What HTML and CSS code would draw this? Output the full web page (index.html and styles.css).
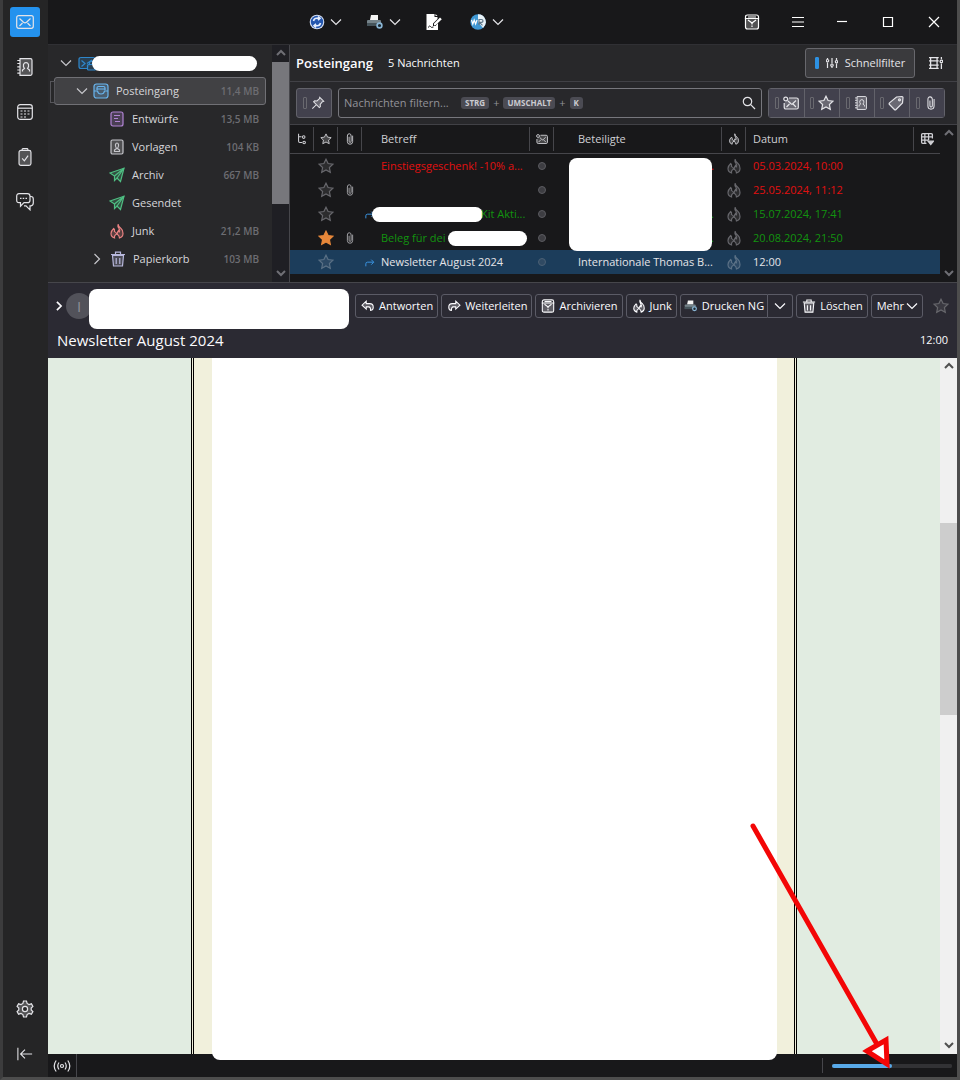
FILE: index.html
```html
<!DOCTYPE html>
<html lang="de">
<head>
<meta charset="utf-8">
<title>Posteingang</title>
<link rel="stylesheet" href="styles.css">
</head>
<body>
<svg class="sprite" aria-hidden="true">
  <symbol id="down" viewBox="0 0 12 12"><path d="M1 3.5l5 5 5-5"/></symbol>
  <symbol id="up" viewBox="0 0 12 12"><path d="M2 8l4-4 4 4"/></symbol>
  <symbol id="downs" viewBox="0 0 12 12"><path d="M2 4l4 4 4-4"/></symbol>
  <symbol id="right" viewBox="0 0 12 12"><path d="M3.5 1l5 5-5 5"/></symbol>
  <symbol id="mail" viewBox="0 0 18 14"><rect x=".7" y=".7" width="16.6" height="12.6" rx="2"/><path d="M3.5 3.5l4 3.8q1.5 1.2 3 0l4-3.8M3.5 11l3-3M14.500 11l-3-3"/></symbol>
  <symbol id="book" viewBox="0 0 16 18"><path class="soft" d="M3 .7h10.500q1.500 0 1.500 1.500v13.600q0 1.500-1.500 1.500H3z"/><path d="M.3 2.500h2.700M.3 5.500h2.700M.3 8.800h2.700M.3 12h2.700M.3 15.200h2.700M5.500 13.500v-1.500l2-1.500q-1.500-2-1-4 .7-1.800 2.500-1.800t2.500 1.800q.5 2-1 4l2 1.500v1.500"/></symbol>
  <symbol id="calendar" viewBox="0 0 16 16"><rect x=".7" y=".7" width="14.600" height="14.600" rx="2.500"/><path d="M.7 4.200h14.600"/><path stroke-dasharray="2 1.500" d="M3.500 7h10M3.500 10h10M3.500 13h7"/></symbol>
  <symbol id="task" viewBox="0 0 14 19"><rect class="soft" x=".7" y="2.500" width="12.600" height="15.800" rx="2"/><path d="M4 2.500V1.500q0-.8.8-.8h4.400q.8 0 .8.800v1M4 11l2.300 2.500 4-5.500"/></symbol>
  <symbol id="chat" viewBox="0 0 18 18"><path d="M3 .7h8.500q2.500 0 2.500 2.500v4q0 2.500-2.500 2.500H8l-3.500 3.500V9.700H3Q.7 9.700.7 7.200v-4Q.7.700 3 .7z"/><path d="M14 3.500h1q2.300 0 2.300 2.500v4q0 2.500-2.300 2.800h-1v4l-4-4H8M4 5.300h1.500M6.700 5.300h1.500M9.500 5.300H11"/></symbol>
  <symbol id="gear" viewBox="0 0 18 18"><path class="soft" d="M7.500 1h3l.6 2.400 1.900 1.100 2.400-.7 1.500 2.600L15.200 8v2l1.700 1.600-1.500 2.600-2.400-.7-1.900 1.100-.6 2.400h-3l-.6-2.400L5 13.500l-2.400.7-1.500-2.600L2.800 10V8L1.100 6.400l1.500-2.600 2.400.7 1.900-1.100z"/><circle class="hole" cx="9" cy="9" r="2.600"/></symbol>
  <symbol id="collapse" viewBox="0 0 18 16"><path d="M1 1v14M17 8H4M9 3L4 8l5 5"/></symbol>
  <symbol id="inbox" viewBox="0 0 16 16"><rect class="soft" x="1" y="1" width="14" height="14" rx="2.500"/><path d="M4 7V5q0-1.500 1.500-1.500h5Q12 3.500 12 5v2M1 8h3.500q.5 3 3.500 3t3.500-3H15M4 6h8"/></symbol>
  <symbol id="draft" viewBox="0 0 16 16"><rect class="soft" x="2" y="1" width="12" height="14" rx="2"/><path d="M5 4.500h6M5 7.500h4M6 10.500h5"/></symbol>
  <symbol id="template" viewBox="0 0 16 16"><rect class="soft" x="2" y="1" width="12" height="14" rx="1.500"/><path d="M5.500 12.500V11l2-1.500Q6 7 6.500 5.500 7 4 8 4t1.500 1.500Q10 7 8.500 9.500l2 1.500v1.500z"/></symbol>
  <symbol id="plane" viewBox="0 0 16 16"><path class="soft" d="M15 1.200L1 6l4.500 3v4.500L8 11l3.500 3.500z"/><path d="M15 1.200L5.500 9M15 1.200L8 11"/></symbol>
  <symbol id="fire" viewBox="0 0 14 16"><path class="soft" d="M8 1q-.5 2.500 1 4.500T9.500 9q-1 0-1-1.500Q7.200 9 7 11.500 6 9 4.500 8.500q.5-2-.8-3Q1 8 1 10.500 1 14 4.500 15q-.5-3 2.500-4 2.500 1.500 2.500 4Q13 14 13 10.500 13 7 11 5.500 8.500 4 8 1z"/></symbol>
  <symbol id="bin" viewBox="0 0 16 16"><path class="soft" d="M2.500 4.500h11l-1 10.500h-9z"/><path d="M1 3.500h14M5.500 3V1.200h5V3M6.200 7v6M9.800 7v6"/></symbol>
  <symbol id="account" viewBox="0 0 18 16"><path class="soft" d="M9 13.500H3q-2 0-2-2v-7q0-2 2-2h12q2 0 2 2V6"/><path d="M3.500 5.500L7 8.500l-3.500 3M14 5L9 8.500"/><rect class="soft" x="9.500" y="9.500" width="8" height="5.500" rx="1"/><path d="M11.500 9.500V8q0-1.500 2-1.500t2 1.500v1.500"/></symbol>
  <symbol id="star" viewBox="0 0 16 16"><path class="soft" d="M8 1.200l2.100 4.300 4.800.7-3.500 3.300.9 4.800L8 12l-4.300 2.300.9-4.800L1.100 6.200l4.800-.7z"/></symbol>
  <symbol id="clip" viewBox="0 0 10 16"><path d="M8.500 3.500v8q0 3.500-3.500 3.500t-3.500-3.500V4Q1.500 1 4 1t2.500 3v7q0 1.500-1.400 1.500T3.800 11V5"/></symbol>
  <symbol id="unread" viewBox="0 0 16 14"><circle cx="2.700" cy="3" r="1.900"/><path class="soft" d="M6 2h7.500Q15.300 2 15.300 3.800v7.400q0 1.800-1.800 1.800H3q-1.800 0-1.800-1.800V7"/><path d="M5 5l3 2.800q.8.700 1.600 0L13 4.500M3.500 11l3-3M13 11l-3-3"/></symbol>
  <symbol id="tag" viewBox="0 0 16 16"><path class="soft" d="M8.500 2L14 1.500q1 0 1 1L14.500 8 8 14.500q-.8.800-1.600 0L1.500 9.500q-.8-.8 0-1.600z"/><circle cx="11.500" cy="4.800" r="1"/></symbol>
  <symbol id="pin" viewBox="0 0 16 16"><path class="soft" d="M10 1.500l4.500 4.500-1.500.5-2.500 3 .2 2.500-1.200 1.200L3 6.700l1.200-1.200 2.600.2 2.700-2.500zM6 10l-4.500 4.500"/></symbol>
  <symbol id="search" viewBox="0 0 14 14"><circle cx="5.500" cy="5.500" r="4.200"/><path d="M8.700 8.700L13 13"/></symbol>
  <symbol id="sliders" viewBox="0 0 12 12"><path d="M1.500 1v1M1.500 5.500V11M6 1v5.500M6 10v1M10.500 1v2M10.500 6.500V11"/><circle cx="1.500" cy="3.700" r="1.200"/><circle cx="6" cy="8.200" r="1.200"/><circle cx="10.500" cy="4.700" r="1.200"/></symbol>
  <symbol id="display" viewBox="0 0 13 13"><path d="M0 1.500h9M0 11.500h9M0 4.500h9M0 8.500h9M1.500 1v3.500M7.500 1v3.500M1.500 4.500v4M7.500 4.500v4M1.500 8.500v3M7.500 8.500v3M11.500 1v2M11.500 7v5"/><circle cx="11.500" cy="5" r="1.200"/></symbol>
  <symbol id="thread" viewBox="0 0 12 14"><path d="M2 1v8.500q0 1.500 1.500 1.500H6M2 4.500h3.500"/><circle cx="8" cy="4.800" r="1.500"/><circle cx="8.500" cy="11" r="1.500"/></symbol>
  <symbol id="columns" viewBox="0 0 13 13"><path d="M11.500 6V2.500q0-1-1-1h-8q-1 0-1 1v7q0 1 1 1H6M1 4.500h11M1 7.500h7M4.500 1.500v9M8 1.500v6"/><path class="solid" d="M7.500 8.500h5L10 11.500z"/></symbol>
  <symbol id="archive" viewBox="0 0 16 16"><path class="soft" d="M1.500 4.500h13V13q0 2-2 2h-9q-2 0-2-2z"/><path d="M1.500 5V3q0-2 2-2h9q2 0 2 2v2M4 3h8M4 6l4 3 4-3"/><path stroke-dasharray="1.500 1" d="M8 9v5"/></symbol>
  <symbol id="reply" viewBox="0 0 16 14"><path class="soft" d="M6 1.500L1.200 6 6 10.500V8h3q2 0 2 4 3 0 3-3.500 0-4.200-4-4.200H6z"/></symbol>
  <symbol id="forward" viewBox="0 0 16 14"><path class="soft" d="M10 1.500L14.800 6 10 10.500V8H7q-2 0-2 4-3 0-3-3.500 0-4.200 4-4.200h4z"/></symbol>
  <symbol id="fwd" viewBox="0 0 12 10"><path d="M1 9V6q0-2 2-2h7M7.500 1l3 3-3 3"/></symbol>
  <symbol id="print" viewBox="0 0 18 16"><path fill="#f4f4f4" stroke="none" d="M5 1h7v5H4z"/><path fill="#75838a" stroke="none" d="M2 6h12q1 0 1 1v5H1V7q0-1 1-1z"/><path fill="#46545b" stroke="none" d="M1 9h14v3H1z"/><circle cx="13.500" cy="11.500" r="2.400" fill="#1d2a33" stroke="#8ab6d6" stroke-width="1.600"/></symbol>
  <symbol id="sync" viewBox="0 0 16 16"><circle cx="8" cy="8" r="7.300" fill="#d5dff2" stroke="none"/><circle cx="8" cy="8" r="6.200" fill="#2456ae" stroke="none"/><path stroke="#e5eeff" stroke-width="1.600" d="M4.500 7q.5-2.500 3-2.700h3M9 2.500l2 1.800-2 1.900M11.500 9q-.5 2.500-3 2.700h-3M7 9.800l-2 1.900 2 1.800"/></symbol>
  <symbol id="sign" viewBox="0 0 18 18"><path fill="#fff" stroke="none" d="M1.500 1h8v3h3v2L8 10.500V13h2.500L13 10v7H1.500z"/><path fill="#fff" stroke="none" d="M10.500 1l2 2h-2zM9 10.500l6-6 1.800 1.700-6 5.800L9 12.500z"/><path stroke="#18181a" stroke-width="1" d="M3 14.500q2-2.500 2.500-1t3 .5"/></symbol>
  <symbol id="wr" viewBox="0 0 16 16"><circle cx="8" cy="8" r="7.700" fill="#3f97d3" stroke="none"/><path fill="#e9f2f8" stroke="none" d="M8 .3a7.700 7.700 0 0 1 5 13.600L8 8z"/><path stroke="#fff" d="M1.500 6l1.300 4 1.400-4 1.400 4L7 6"/><path stroke="#5d7688" d="M9 11V5.500h2.500q1.500 0 1.500 1.400t-1.500 1.400H9.500l3 3"/></symbol>
  <symbol id="signal" viewBox="0 0 18 14"><circle cx="9" cy="7" r="1.500"/><path d="M6 3.500q-2.500 3.500 0 7M12 3.500q2.500 3.500 0 7M3.200 1.500q-4 5.500 0 11M14.800 1.500q4 5.500 0 11"/></symbol>
</svg>

<div class="window">
  <nav class="rail" aria-label="Bereiche">
    <button class="space current" aria-label="E-Mail"><svg class="i18"><use href="#mail"/></svg></button>
    <button class="space" aria-label="Adressbuch"><svg class="i18"><use href="#book"/></svg></button>
    <button class="space" aria-label="Kalender"><svg class="i16"><use href="#calendar"/></svg></button>
    <button class="space" aria-label="Aufgaben"><svg class="i18"><use href="#task"/></svg></button>
    <button class="space" aria-label="Chat"><svg class="i18"><use href="#chat"/></svg></button>
    <span class="spacer"></span>
    <button class="space" aria-label="Einstellungen"><svg class="i18"><use href="#gear"/></svg></button>
    <button class="space" aria-label="Einklappen"><svg class="i16"><use href="#collapse"/></svg></button>
  </nav>

  <div class="main">
    <header class="toolbar">
      <div class="tools">
        <button class="tool" aria-label="Abrufen"><svg class="i16"><use href="#sync"/></svg><svg class="i12"><use href="#down"/></svg></button>
        <button class="tool" aria-label="Drucken"><svg class="i18"><use href="#print"/></svg><svg class="i12"><use href="#down"/></svg></button>
        <button class="tool" aria-label="Unterschrift"><svg class="i18"><use href="#sign"/></svg></button>
        <button class="tool" aria-label="Wörter"><svg class="i16"><use href="#wr"/></svg><svg class="i12"><use href="#down"/></svg></button>
      </div>
      <div class="controls">
        <div class="app-controls">
          <button class="control" aria-label="Archiv"><svg class="i16"><use href="#archive"/></svg></button>
          <button class="control" aria-label="Menü"><svg class="i12" viewBox="0 0 12 12"><path d="M0 1.500h12M0 6h12M0 10.500h12"/></svg></button>
        </div>
        <button class="control" aria-label="Minimieren"><svg class="i12" viewBox="0 0 12 12"><path d="M1 5.500h10"/></svg></button>
        <button class="control" aria-label="Maximieren"><svg class="i12" viewBox="0 0 12 12"><path d="M1.500 1.500h9v9h-9z"/></svg></button>
        <button class="control" aria-label="Schließen"><svg class="i12" viewBox="0 0 12 12"><path d="M1 1l10 10M11 1L1 11"/></svg></button>
      </div>
    </header>

    <div class="panes">
      <aside class="folders">
        <ul class="tree">
          <li class="folder account"><svg class="i12"><use href="#down"/></svg><svg class="i18 blue"><use href="#account"/></svg><span class="mask mask-account"></span></li>
          <li class="folder inbox"><svg class="i12"><use href="#down"/></svg><svg class="i16 sky"><use href="#inbox"/></svg><span class="name">Posteingang</span><span class="size">11,4 MB</span></li>
          <li class="folder sub"><svg class="i16 violet"><use href="#draft"/></svg><span class="name">Entwürfe</span><span class="size">13,5 MB</span></li>
          <li class="folder sub"><svg class="i16"><use href="#template"/></svg><span class="name">Vorlagen</span><span class="size">104 KB</span></li>
          <li class="folder sub"><svg class="i16 green"><use href="#plane"/></svg><span class="name">Archiv</span><span class="size">667 MB</span></li>
          <li class="folder sub"><svg class="i16 green"><use href="#plane"/></svg><span class="name">Gesendet</span></li>
          <li class="folder sub"><svg class="i16 rose"><use href="#fire"/></svg><span class="name">Junk</span><span class="size">21,2 MB</span></li>
          <li class="folder trash"><svg class="i12"><use href="#right"/></svg><svg class="i16 lilac"><use href="#bin"/></svg><span class="name">Papierkorb</span><span class="size">103 MB</span></li>
        </ul>
        <div class="scroll dark"><svg class="i12"><use href="#up"/></svg><div class="track"><div class="thumb thumb-folders"></div></div><svg class="i12"><use href="#downs"/></svg></div>
      </aside>

      <section class="list">
        <div class="list-head">
          <h1>Posteingang</h1><span class="count">5 Nachrichten</span>
          <button class="quick"><span class="mark on"></span><svg class="i12"><use href="#sliders"/></svg>Schnellfilter</button>
          <button class="icon-button" aria-label="Anzeige"><svg class="i14"><use href="#display"/></svg></button>
        </div>
        <div class="filter">
          <button class="filter-button pin" aria-label="Anheften"><span class="mark"></span><svg class="i14"><use href="#pin"/></svg></button>
          <label class="search">
            <input type="text" placeholder="Nachrichten filtern..." aria-label="Nachrichten filtern">
            <span class="keys"><kbd>STRG</kbd>+<kbd>UMSCHALT</kbd>+<kbd>K</kbd></span>
            <svg class="i14"><use href="#search"/></svg>
          </label>
          <div class="filter-group">
            <button class="filter-button" aria-label="Ungelesen"><span class="mark"></span><svg class="i16"><use href="#unread"/></svg></button>
            <button class="filter-button" aria-label="Stern"><span class="mark"></span><svg class="i16"><use href="#star"/></svg></button>
            <button class="filter-button" aria-label="Kontakt"><span class="mark"></span><svg class="i14"><use href="#book"/></svg></button>
            <button class="filter-button" aria-label="Schlagwort"><span class="mark"></span><svg class="i16"><use href="#tag"/></svg></button>
            <button class="filter-button" aria-label="Anhang"><span class="mark"></span><svg class="i14"><use href="#clip"/></svg></button>
          </div>
        </div>
        <div class="messages">
          <table>
            <colgroup><col class="narrow"><col class="narrow"><col class="narrow"><col><col class="narrow"><col><col class="narrow"><col><col class="picker"></colgroup>
            <thead>
              <tr><th><svg class="i12"><use href="#thread"/></svg></th><th><svg class="i12"><use href="#star"/></svg></th><th><svg class="i12"><use href="#clip"/></svg></th><th class="subject">Betreff</th><th><svg class="i12"><use href="#unread"/></svg></th><th class="people">Beteiligte</th><th><svg class="i12"><use href="#fire"/></svg></th><th class="date">Datum</th><th><svg class="i14"><use href="#columns"/></svg></th></tr>
            </thead>
            <tbody>
              <tr class="red"><td></td><td><svg class="i16 dim"><use href="#star"/></svg></td><td></td><td class="subject">Einstiegsgeschenk! -10% a...</td><td><span class="dot"></span></td><td class="people hidden">.</td><td><svg class="i16 dim"><use href="#fire"/></svg></td><td class="date" colspan="2">05.03.2024, 10:00</td></tr>
              <tr class="red"><td></td><td><svg class="i16 dim"><use href="#star"/></svg></td><td><svg class="i12 light-icon"><use href="#clip"/></svg></td><td class="subject"></td><td><span class="dot"></span></td><td class="people"></td><td><svg class="i16 dim"><use href="#fire"/></svg></td><td class="date" colspan="2">25.05.2024, 11:12</td></tr>
              <tr class="green-text"><td></td><td><svg class="i16 dim"><use href="#star"/></svg></td><td></td><td class="subject forwarded"><svg class="sent"><use href="#fwd"/></svg><span class="mask mask-wide"></span>Kit Akti...</td><td><span class="dot"></span></td><td class="people hidden">.</td><td><svg class="i16 dim"><use href="#fire"/></svg></td><td class="date" colspan="2">15.07.2024, 17:41</td></tr>
              <tr class="green-text"><td></td><td><svg class="i16 starred"><use href="#star"/></svg></td><td><svg class="i12 light-icon"><use href="#clip"/></svg></td><td class="subject">Beleg für dei<span class="mask mask-short"></span></td><td><span class="dot"></span></td><td class="people hidden">.</td><td><svg class="i16 dim"><use href="#fire"/></svg></td><td class="date" colspan="2">20.08.2024, 21:50</td></tr>
              <tr class="selected"><td></td><td><svg class="i16 dim"><use href="#star"/></svg></td><td></td><td class="subject forwarded"><svg class="sent"><use href="#fwd"/></svg>Newsletter August 2024</td><td><span class="dot"></span></td><td class="people">Internationale Thomas B...</td><td><svg class="i16 dim"><use href="#fire"/></svg></td><td class="date" colspan="2">12:00</td></tr>
            </tbody>
          </table>
          <div class="scroll plain"><svg class="i12"><use href="#up"/></svg><div class="track"></div><svg class="i12"><use href="#downs"/></svg></div>
          <span class="mask mask-people"></span>
        </div>
      </section>
    </div>

    <section class="message-head">
      <div class="sender-row">
        <button class="expand" aria-label="Mehr anzeigen"><svg class="i10"><use href="#right"/></svg></button>
        <span class="avatar">I</span>
        <span class="mask mask-sender"></span>
        <div class="actions">
          <button class="action"><svg class="i14"><use href="#reply"/></svg>Antworten</button>
          <button class="action"><svg class="i14"><use href="#forward"/></svg>Weiterleiten</button>
          <button class="action"><svg class="i14"><use href="#archive"/></svg>Archivieren</button>
          <button class="action"><svg class="i14"><use href="#fire"/></svg>Junk</button>
          <div class="split"><button class="action"><svg class="i14"><use href="#print"/></svg>Drucken NG</button><button class="action more" aria-label="Druckoptionen"><svg class="i12"><use href="#down"/></svg></button></div>
          <button class="action"><svg class="i14"><use href="#bin"/></svg>Löschen</button>
          <button class="action menu">Mehr<svg class="i12"><use href="#down"/></svg></button>
        </div>
        <button class="favorite" aria-label="Stern"><svg class="i16 dim"><use href="#star"/></svg></button>
      </div>
      <div class="subject-row"><h2>Newsletter August 2024</h2><time>12:00</time></div>
    </section>

    <section class="reader">
      <div class="canvas"><div class="sheet"><div class="mask paper"></div></div></div>
      <div class="scroll light"><svg class="i12"><use href="#up"/></svg><div class="track"><div class="thumb thumb-reader"></div></div><svg class="i12"><use href="#downs"/></svg></div>
    </section>

    <footer class="status">
      <span class="online"><svg class="i18"><use href="#signal"/></svg></span>
      <span class="load"><progress max="100" value="50" aria-label="Fortschritt"></progress></span>
    </footer>
  </div>

  <svg class="pointer" viewBox="0 0 150 254" aria-hidden="true"><path d="M5 6L130 226" stroke-width="5"/><path class="head" d="M119 231L138 220L139 244z"/></svg>
</div>
</body>
</html>
```

FILE: styles.css
```css
* { box-sizing: border-box; }
body {
  margin: 0;
  background: #18181a;
  color: #e4e4e8;
  font: 11px/16px "Open Sans", "Noto Sans", sans-serif;
}
button { margin: 0; padding: 0; border: 0; background: none; color: inherit; font: inherit; display: flex; align-items: center; justify-content: center; }
h1, h2, ul { margin: 0; padding: 0; }
svg { fill: none; stroke: currentColor; stroke-width: 1.2; flex: none; display: block; }
.sprite { position: absolute; width: 0; height: 0; }
.soft { fill: currentColor; fill-opacity: var(--tint, .25); }
.hole { fill: #252526; }
.solid { fill: currentColor; }
.i10 { width: 10px; height: 10px; stroke-width: 2; }
.i12 { width: 12px; height: 12px; }
.i14 { width: 14px; height: 14px; }
.i16 { width: 16px; height: 16px; }
.i18 { width: 18px; height: 18px; }
.blue { color: #2f87cb; }
.sky { color: #69b5ee; }
.lilac { color: #b8b8dc; }
.dim { color: #67676c; }
.light-icon { color: #aaaaaf; }
.starred { color: #e8883a; --tint: 1; }
.mask { background: #fff; border-radius: 8px; flex: none; }

.window {
  position: relative;
  display: flex;
  height: 100vh;
  border: 3px solid #4d4d4d;
  border-top: 0;
  border-left-color: #3c3c3d;
  overflow: hidden;
}
.rail { width: 45px; flex: none; display: flex; flex-direction: column; align-items: center; gap: 15px; padding: 7px 1px 8px 0; background: #252526; }
.space { width: 30px; height: 30px; border-radius: 3px; }
.space.current { background: #2492ee; }
.spacer { flex: 1; }
.main { flex: 1; min-width: 0; display: flex; flex-direction: column; }

.toolbar { height: 45px; flex: none; display: flex; justify-content: space-between; align-items: center; border-bottom: 1px solid #303034; }
.tools { display: flex; gap: 24px; padding-left: 261px; }
.tool { gap: 5px; }
.tool:last-child { gap: 6px; margin-left: 3px; }
.controls, .app-controls { display: flex; }
.app-controls { margin-right: -2px; }
.control { width: 46px; height: 44px; color: #fff; }

.panes { display: flex; flex: none; border-bottom: 1px solid #46464b; }
.folders { width: 242px; flex: none; display: flex; background: #28282a; border-right: 1px solid #46464b; }
.tree { flex: 1; list-style: none; padding: 4px 6px 0; }
.folder { position: relative; display: flex; align-items: center; height: 28px; border: 1px solid transparent; padding: 0 6px 0 0; border-radius: 3px; }
.folder svg:first-child { color: #c6c6cb; }
.account { padding-left: 5px; gap: 6px; }
.inbox { padding-left: 21px; gap: 5px; background: #414144; border-color: #707075; }
.inbox .name { padding-left: 2px; }
.inbox::before { content: ""; position: absolute; left: -5px; top: 3px; width: 3px; height: 20px; border: 1px solid #55555a; }
.sub { padding-left: 54px; gap: 7px; }
.trash { padding-left: 36px; gap: 7px; }
.sub .violet:first-child { color: #b184d4; }
.sub .green:first-child { color: #4fbf83; }
.sub .rose:first-child { color: #e98282; }
.name { flex: 1; color: #d6d6da; }
.size { color: #6d6d72; font-weight: 600; font-size: 10px; }
.mask-account { position: absolute; left: 37px; right: 8px; height: 15px; }

.scroll { width: 17px; flex: none; display: flex; flex-direction: column; align-items: center; padding: 2px 0 3px; }
.scroll svg { stroke-width: 2; }
.track { flex: 1; width: 100%; padding: 3px 0 2px; }
.dark { background: #1f1f24; color: #6f6f75; }
.plain { color: #6f6f75; }
.light { background: #f0f0f0; color: #505050; }
.thumb { background: #77777c; }
.light .thumb { background: #cdcdcd; }
.thumb-folders { height: 70%; }
.thumb-reader { height: 29%; margin-top: 148px; }

.list { flex: 1; min-width: 0; }
.list-head { height: 37px; display: flex; align-items: center; padding: 0 6px; background: #28282a; border-bottom: 1px solid #414146; }
h1 { font-size: 13px; font-weight: 600; line-height: 18px; color: #fbfbfe; }
.count { margin-left: 15px; flex: 1; color: #fbfbfe; }
.quick { height: 30px; width: 110px; gap: 7px; background: #3a3a3d; border: 1px solid #68686d; border-radius: 3px; }
.icon-button { width: 30px; margin-left: 6px; color: #e4e4e8; }
.mark { width: 4px; height: 12px; border: 1px solid #69696f; border-radius: 1px; }
.mark.on { background: #2d91e2; border-color: #2d91e2; }
.filter { display: flex; align-items: center; gap: 6px; height: 43px; padding: 0 12px 0 6px; background: #28282b; border-bottom: 1px solid #414146; }
.filter-button { width: 35px; height: 28px; gap: 4px; background: #42414d; }
.pin { width: 36px; height: 30px; border: 1px solid #62626a; border-radius: 3px; }
.filter-group { display: flex; border: 1px solid #62626a; border-radius: 3px; }
.filter-button + .filter-button { border-left: 1px solid #62626a; }
.search { flex: 1; min-width: 0; height: 30px; display: flex; align-items: center; border: 1px solid #77777d; border-radius: 3px; padding: 0 5px; }
.search input { width: 117px; padding: 0; border: 0; background: none; color: inherit; font: inherit; outline: 0; }
.search input::placeholder { color: #929298; }
.keys { flex: 1; display: flex; align-items: center; gap: 4px; color: #929298; }
kbd { background: #4b4b53; border-radius: 3px; padding: 0 4px; font: bold 8px/12px "Open Sans", sans-serif; color: #cacacf; }

.messages { position: relative; display: flex; height: 157px; }
table { flex: 1; width: 100%; table-layout: fixed; border-collapse: separate; border-spacing: 0; align-self: flex-start; }
.narrow { width: 24px; }
.picker { width: 26px; }
th { height: 29px; padding: 0; border-bottom: 1px solid #46464b; font-weight: 400; text-align: left; color: #cfcfd4; background: linear-gradient(#46464b, #46464b) right 2px / 1px 24px no-repeat; }
th:last-child { background: none; }
td { height: 24px; padding: 0; white-space: nowrap; }
th svg, td svg { margin: 0 auto; }
.subject { padding-left: 19px; overflow: hidden; }
.people { padding-left: 24px; }
.date { padding-left: 7px; }
.forwarded { padding-left: 3px; }
.forwarded svg { display: inline-block; margin: 0 6px 0 0; vertical-align: middle; }
.sent { width: 10px; height: 10px; color: #3a93e0; }
.hidden { text-align: right; padding-right: 8px; }
.red { color: #e01010; }
.green-text { color: #12930f; }
.selected { background: #1c3d5b; }
.dot { display: block; width: 8px; height: 8px; margin: 0 auto; border: 1px solid #5b5b60; background: #3d3d42; border-radius: 50%; }
.selected .dot { background: #304a63; border-color: #4b6075; }
.selected .dim { color: #5a7085; }
.mask-wide { display: inline-block; width: 111px; height: 15px; margin: 0 -2px 0 -9px; vertical-align: middle; }
.mask-short { display: inline-block; width: 79px; height: 15px; margin-left: 2px; vertical-align: middle; }
.mask-people { position: absolute; left: 279px; top: 33px; width: 143px; height: 93px; }

.message-head { flex: none; padding: 6px 8px 0; height: 75px; background: #2b2a33; color: #fbfbfe; }
.sender-row { display: flex; align-items: center; height: 34px; }
.expand { width: 10px; margin: 0 1px 0 -2px; }
.avatar { width: 26px; height: 26px; border-radius: 50%; background: #52525a; color: #8f8f98; text-align: center; font-size: 15px; line-height: 26px; margin-left: 1px; }
.mask-sender { flex: 1; height: 40px; margin-left: -3px; align-self: flex-start; }
.actions { display: flex; gap: 3px; margin-left: 6px; }
.action { height: 24px; gap: 4px; padding: 0 4px 0 5px; border: 1px solid #5b5b66; border-radius: 3px; white-space: nowrap; }
.menu { gap: 2px; }
.split { display: flex; }
.split .action:first-child { border-radius: 3px 0 0 3px; padding: 0 3px; }
.split .more { border-left: 0; border-radius: 0 3px 3px 0; padding: 0 6px; }
.favorite { margin-left: 10px; }
.subject-row { display: flex; justify-content: space-between; align-items: center; margin-top: 5px; padding: 0 1px; height: 24px; }
h2 { font-size: 15px; font-weight: 400; line-height: 20px; }

.reader { flex: 1; min-height: 0; display: flex; }
.canvas { flex: 1; display: flex; padding: 0 143px; background: #e1ece1; }
.sheet { flex: 1; background: #f1f0dc; border: 3px double #000; border-width: 0 3px; padding: 0 17px 0 18px; }
.paper { position: relative; height: calc(100% + 6px); border-radius: 0 0 8px 8px; }
.light .track { min-height: 0; }

.status { flex: none; display: flex; justify-content: space-between; height: 23px; }
.online { width: 29px; display: flex; align-items: center; justify-content: center; border-right: 1px solid #46464b; }
.load { display: flex; align-items: center; margin: 4px 0; padding: 0 5px 0 9px; border-left: 1px solid #46464b; }
progress { display: block; width: 120px; height: 4px; border: 0; appearance: none; background: #323235; border-radius: 2px; }
progress::-webkit-progress-bar { background: #323235; border-radius: 2px; }
progress::-webkit-progress-value { background: #58a9e8; border-radius: 2px; }

.pointer { position: absolute; right: 59px; bottom: 3px; width: 150px; height: 254px; stroke: #f30606; stroke-linecap: round; }
.pointer .head { fill: #fff; stroke-width: 5; stroke-linejoin: miter; }
```
